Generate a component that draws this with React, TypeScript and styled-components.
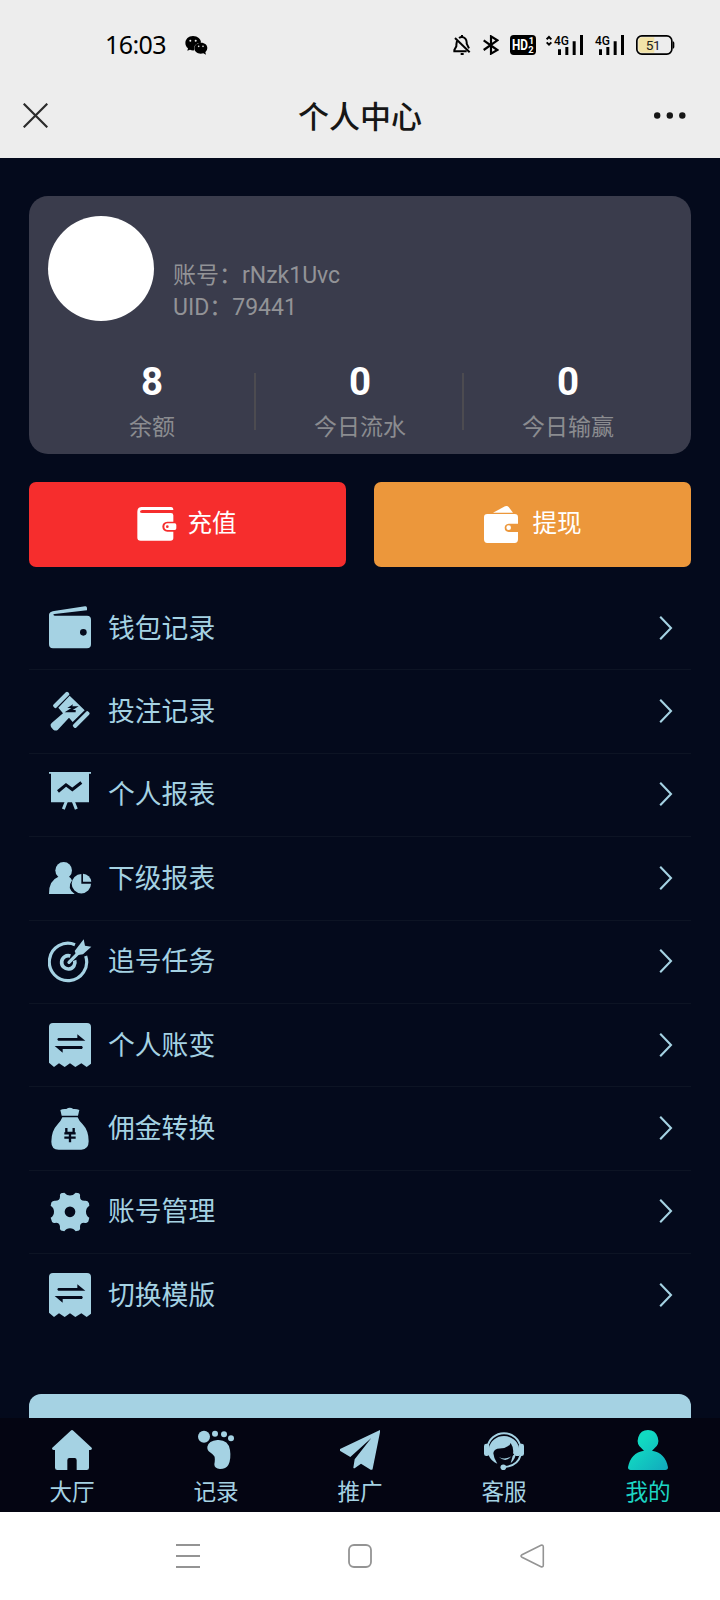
import React from 'react';
import styled, { createGlobalStyle } from 'styled-components';

const ICE = '#a5d2e3';
const NIGHT = '#040a1c';

const GlobalStyle = createGlobalStyle`
  *, *::before, *::after { box-sizing: border-box; }
  body {
    margin: 0;
    background: ${NIGHT};
    font-family: Roboto, "Noto Sans CJK SC", sans-serif;
  }
`;

const Screen = styled.div`
  display: flex;
  flex-direction: column;
  width: 720px;
  height: 1600px;
  overflow: hidden;
  background: ${NIGHT};
`;

const StatusBar = styled.div`
  display: flex;
  align-items: center;
  flex: none;
  height: 90px;
  padding: 0 45px 0 105px;
  background: #ededed;
  color: #000;
`;

const Clock = styled.span`
  width: 62px;
  padding-bottom: 2px;
  font-family: "Noto Sans", sans-serif;
  font-size: 25px;
  line-height: 34px;
  letter-spacing: -0.6px;
  white-space: nowrap;
`;

const StatusGlyph = styled.svg<{ $gap: number }>`
  display: block;
  flex: none;
  margin-left: ${(p) => p.$gap}px;
`;

const StatusSpacer = styled.div`
  flex: 1;
`;

const TitleBar = styled.header`
  display: flex;
  align-items: center;
  justify-content: space-between;
  flex: none;
  height: 68px;
  padding: 0 34px 18px 23px;
  background: #ededed;
`;

const PageTitle = styled.h1`
  margin: 0;
  padding: 5px 0 0 18px;
  font-size: 31px;
  font-weight: 500;
  line-height: 45px;
  color: #161616;
`;

const Glyph = styled.svg`
  display: block;
  flex: none;
`;

const Content = styled.main`
  display: flex;
  flex-direction: column;
  flex: 1;
  min-height: 0;
  overflow: hidden;
  padding: 38px 29px 0;
`;

const ProfileCard = styled.section`
  display: flex;
  flex-direction: column;
  flex: none;
  height: 258px;
  padding: 20px 19px 0;
  border-radius: 19px;
  background: #3a3c4c;
`;

const Identity = styled.div`
  display: flex;
  gap: 19px;
  height: 105px;
`;

const Avatar = styled.div`
  width: 106px;
  height: 105px;
  border-radius: 50%;
  background: #fff;
`;

const IdentityLines = styled.div`
  padding-top: 44px;
  font-size: 23px;
  line-height: 32px;
  color: #929397;
`;

const Stats = styled.div`
  display: grid;
  grid-template-columns: repeat(3, 1fr);
  margin-top: 38px;
`;

const Stat = styled.div`
  display: flex;
  flex-direction: column;
  align-items: center;
  position: relative;

  & + &::before {
    content: '';
    position: absolute;
    left: -2px;
    top: 14px;
    width: 2px;
    height: 57px;
    background: #4c4b50;
  }
`;

const StatValue = styled.strong`
  font-size: 38.5px;
  font-weight: 700;
  line-height: 46px;
  color: #fff;
`;

const StatLabel = styled.span`
  font-size: 23px;
  line-height: 34px;
  margin-top: 6px;
  color: #8b8c90;
`;

const Actions = styled.div`
  display: grid;
  grid-template-columns: 1fr 1fr;
  gap: 28px;
  flex: none;
  margin-top: 28px;
`;

const ActionButton = styled.button<{ $tone: string; $gap: number }>`
  display: flex;
  align-items: center;
  justify-content: center;
  gap: ${(p) => p.$gap}px;
  height: 85px;
  padding: 0 1px 2px 0;
  border: 0;
  border-radius: 7px;
  background: ${(p) => p.$tone};
  color: #fff;
  font: 400 24.6px/36px Roboto, "Noto Sans CJK SC", sans-serif;
`;

const Menu = styled.nav`
  flex: none;
  margin-top: 19px;
`;

const MenuRow = styled.a`
  display: flex;
  align-items: center;
  height: 83.4px;
  padding: 0 18.5px 0 19px;
  color: ${ICE};
  font-size: 26.8px;
  line-height: 40px;

  & + & {
    box-shadow: inset 0 1px 0 #0d1424;
  }
`;

const MenuLabel = styled.span`
  flex: 1;
  margin-left: 16px;
  padding-top: 1.8px;
`;

const LogoutButton = styled.div`
  flex: none;
  height: 83px;
  margin-top: 57.4px;
  border-radius: 12px;
  background: ${ICE};
`;

const TabBar = styled.nav`
  display: grid;
  grid-template-columns: repeat(5, 1fr);
  flex: none;
  height: 94px;
  background: #040512;
`;

const Tab = styled.a<{ $active?: boolean }>`
  display: flex;
  flex-direction: column;
  align-items: center;
  padding-top: 12px;
  color: ${(p) => (p.$active ? '#1dd5c4' : ICE)};
  font-size: 22.6px;
  line-height: 32px;
`;

const TabLabel = styled.span`
  margin-top: 7px;
`;

const SystemBar = styled.footer`
  display: flex;
  align-items: center;
  justify-content: space-between;
  flex: none;
  height: 88px;
  padding: 0 174px 0 175px;
  background: #fff;
`;

const FlapWalletIcon = () => (
  <g fill={ICE}>
    <path d="M87 436C87 426 93 424 102 422L195 408Q201 407 201 413V420L104 431Q96 433 104 436H201Q213 436 213 448V522Q213 534 201 534H99Q87 534 87 522Z" />
    <circle cx="190" cy="486" r="10" fill={NIGHT} />
  </g>
);

const GavelIcon = () => (
  <g fill={ICE}>
    <rect x="-31" y="-7" width="62" height="13" rx="5" transform="translate(94 90) rotate(-45)" />
    <rect x="-32" y="-7" width="64" height="13" rx="5" transform="translate(154 149) rotate(-45)" />
    <path d="M119 77L164 121L128 156L117 143L83 180Q77 184 70 179L63 171Q59 164 65 159L99 130L85 113Z" />
    <path d="M129 103L112 114H124L104 127H137V120H128L146 109H127Z" fill={NIGHT} />
  </g>
);

const BoardIcon = () => (
  <g fill={ICE}>
    <path d="M57 306H183V313H177V398H63V313H57Z" />
    <path d="M109 396L100 419M130 396L139 419" stroke={ICE} strokeWidth="9" />
    <path d="M84 366L108 346L127 360L154 339" stroke={NIGHT} strokeWidth="9" fill="none" />
  </g>
);

const TeamIcon = () => (
  <g fill={ICE}>
    <circle cx="101" cy="601" r="25" />
    <path d="M57 672Q56 632 84 621H118Q123 624 126 631Q109 653 134 672Z" />
    <path d="M154 612A29 29 0 1 0 183 641H154Z" />
    <path d="M159 611A26 26 0 0 1 184 635H159Z" />
  </g>
);

const TargetIcon = () => (
  <g fill="none" stroke={ICE}>
    <path d="M135 74A56 56 0 1 0 167 108" strokeWidth="9.5" />
    <path d="M121 108A20 20 0 1 0 134 121" strokeWidth="11" />
    <path d="M117 127L146 98" strokeWidth="10" strokeLinecap="round" />
    <path d="M134 93L161 58L165 77L184 80L159 103L139 106Z" fill={ICE} stroke="none" />
  </g>
);

const ReceiptIcon = () => (
  <g fill={ICE}>
    <path d="M57 321Q57 309 69 309H171Q183 309 183 321V431L170 441L154 430L136 441L120 430L104 441L87 430L72 441L57 428Z" />
    <path d="M85 354H142V343L166 362H85Q79 358 85 354ZM156 378H74L98 398V387H156Q161 383 156 378Z" fill={NIGHT} />
  </g>
);

const MoneyBagIcon = () => (
  <g fill={ICE}>
    <path d="M91 571Q98 567 109 568Q119 561 130 568Q140 567 148 571L144 588H95Z" />
    <path d="M97 593H143Q146 602 158 614Q176 633 176 665Q176 690 154 690H86Q64 690 64 666Q64 634 83 614Q94 602 97 593Z" />
    <path d="M109 625V640H131V625M103 641H137M103 654H137M120 639V668" stroke={NIGHT} strokeWidth="7" fill="none" />
  </g>
);

const GearIcon = () => (
  <g>
    <path
      fill={ICE}
      d="M93 70L103 69Q109 77 120 77Q131 77 137 69L147 70Q152 74 150 80Q150 94 165 93Q173 92 177 100L178 108Q168 114 168 126Q168 138 178 144L175 155Q170 161 162 159Q150 159 150 171Q152 179 147 182L137 184Q131 175 120 175Q109 175 103 184L93 182Q88 179 90 171Q89 159 78 159Q69 161 66 156L62 144Q72 138 72 126Q72 114 62 108L64 98Q68 92 76 93Q90 93 90 80Q88 74 93 70Z"
    />
    <circle cx="120" cy="126" r="16" fill={NIGHT} />
  </g>
);

const HomeIcon = () => (
  <path
    fill={ICE}
    d="M212 137Q216 133 220 137L275 188Q278 195 271 195H267V248Q267 255 260 255H230V226Q230 219 224 219H208Q202 219 202 226V255H172Q165 255 165 248V195H161Q154 194 157 188Z"
  />
);

const FootprintIcon = () => (
  <g fill={ICE}>
    <circle cx="612" cy="155" r="18" />
    <circle cx="645" cy="146" r="9" />
    <circle cx="672" cy="148" r="9" />
    <circle cx="693" cy="160" r="9" />
    <path d="M652 165Q685 163 690 195Q694 222 685 240Q678 252 660 252Q643 251 643 238Q646 221 643 214Q639 208 630 202Q621 196 622 185Q626 167 652 165Z" />
  </g>
);

const PlaneIcon = () => (
  <g fill={ICE}>
    <path d="M180 30L60 87Q58 91 62 94L91 111L154 54L104 118L100 143Q102 147 106 143L123 131L152 149Q157 151 158 146L181 32Z" />
  </g>
);

const SupportIcon = () => (
  <g fill={ICE}>
    <path d="M502 78A50.5 50.5 0 0 1 602 78" fill="none" stroke={ICE} strokeWidth="6" transform="translate(0 5)" />
    <path d="M507 84A45.5 42 0 0 1 597 84V108H588L579 100Q582 84 572 69Q568 80 553 84L532 86Q521 89 520 100Q521 115 532 131Q513 123 507 108Z" />
    <rect x="492" y="71" width="16" height="37" rx="7" />
    <rect x="596" y="71" width="16" height="37" rx="7" />
    <path d="M602 105Q593 138 553 141" fill="none" stroke={ICE} strokeWidth="6" />
    <path d="M588 97Q588 116 572 130L578 108ZM536 110Q554 122 574 109Q557 130 536 110Z" />
    <circle cx="550" cy="142" r="8.5" />
  </g>
);

const PersonIcon = () => (
  <g>
    <defs>
      <linearGradient id="person" x1="0" y1="0" x2="1" y2="1">
        <stop offset="0.3" stopColor="#11dac2" />
        <stop offset="1" stopColor="#12a8bd" />
      </linearGradient>
    </defs>
    <path
      fill="url(#person)"
      d="M864 135A31 31 0 0 1 882 191L876 197Q916 203 924 247Q924 255 916 255H812Q804 255 804 247Q812 203 852 197L846 191A31 31 0 0 1 864 135Z"
    />
  </g>
);

const MENU = [
  { label: '钱包记录', box: '84 407 132 132', Icon: FlapWalletIcon },
  { label: '投注记录', box: '54 57 132 132', Icon: GavelIcon },
  { label: '个人报表', box: '54 307.5 132 132', Icon: BoardIcon },
  { label: '下级报表', box: '54 557.7 132 132', Icon: TeamIcon },
  { label: '追号任务', box: '54 57 132 132', Icon: TargetIcon },
  { label: '个人账变', box: '54 309 132 132', Icon: ReceiptIcon },
  { label: '佣金转换', box: '54 559 132 132', Icon: MoneyBagIcon },
  { label: '账号管理', box: '54 57.5 132 132', Icon: GearIcon },
  { label: '切换模版', box: '54 309 132 132', Icon: ReceiptIcon },
];

const TABS = [
  { label: '大厅', box: '156 135 120 120', Icon: HomeIcon },
  { label: '记录', box: '588 135 120 120', Icon: FootprintIcon },
  { label: '推广', box: '60 30 120 120', Icon: PlaneIcon },
  { label: '客服', box: '492 30 120 120', Icon: SupportIcon },
  { label: '我的', box: '804 135 120 120', Icon: PersonIcon, active: true },
];

const STATS = [
  { value: '8', label: '余额' },
  { value: '0', label: '今日流水' },
  { value: '0', label: '今日输赢' },
];

const SignalBars = () => (
  <path d="M594 148H603V165H594ZM616 141H625V165H616ZM638 124H647V165H638ZM660 105H669V165H660Z" />
);

const NetworkLabel = () => (
  <text x="582" y="135" fontFamily="Roboto, sans-serif" fontSize="39" fontWeight="500" textLength="45" lengthAdjust="spacingAndGlyphs">
    4G
  </text>
);

export default function App() {
  return (
    <>
      <GlobalStyle />
      <Screen>
        <StatusBar>
          <Clock>16:03</Clock>
          <StatusGlyph $gap={18} width="23" height="20" viewBox="555 104 69 60">
            <path d="M579 107C593 107 603 116 603 127C586 128 580 139 583 150Q575 151 570 148L562 151L564 144C548 130 558 107 579 107Z" />
            <path d="M603 127C615 127 622 134 622 143Q622 151 616 156L618 163L610 159C595 163 583 155 583 144C583 134 592 127 603 127Z" />
            <g fill="#ededed">
              <circle cx="571" cy="121" r="3" />
              <circle cx="587" cy="121" r="3" />
              <circle cx="596" cy="138" r="2.5" />
              <circle cx="609" cy="138" r="2.5" />
            </g>
          </StatusGlyph>
          <StatusSpacer />
          <StatusGlyph $gap={0} width="18" height="20" viewBox="280 105 54 60">
            <g fill="none" stroke="#000" strokeWidth="6">
              <path d="M298 114Q308 107 317 116Q322 122 321 131L328 145M292 123Q290 131 290 139L284 150V154H321" />
              <path d="M286 114L330 157" />
              <path d="M307 105V111M303 162H312" />
            </g>
          </StatusGlyph>
          <StatusGlyph $gap={12} width="16" height="20" viewBox="369 105 48 60">
            <path d="M371 121L412 150L393 161V109L412 121L371 150" fill="none" stroke="#000" strokeWidth="6.5" />
          </StatusGlyph>
          <StatusGlyph $gap={11} width="26" height="20" viewBox="450 105 78 60">
            <rect x="450" y="105" width="78" height="60" rx="11" />
            <g fill="#fff" fontFamily="Roboto, sans-serif" fontWeight="700">
              <text x="456" y="150" fontSize="43" textLength="48" lengthAdjust="spacingAndGlyphs">HD</text>
              <text x="506" y="133" fontSize="28">1</text>
              <text x="505" y="158" fontSize="28">2</text>
            </g>
          </StatusGlyph>
          <StatusGlyph $gap={10} width="37" height="32" viewBox="558 87 111 96">
            <path d="M560 118L567 111L574 118M560 127L567 134L574 127" fill="none" stroke="#000" strokeWidth="6" />
            <NetworkLabel />
            <SignalBars />
          </StatusGlyph>
          <StatusGlyph $gap={11} width="30" height="32" viewBox="579 87 90 96">
            <NetworkLabel />
            <SignalBars />
          </StatusGlyph>
          <StatusGlyph $gap={12} width="39" height="20" viewBox="827 105 117 60">
            <rect x="829.5" y="107.5" width="105" height="55" rx="15" fill="#ededed" stroke="#000" strokeWidth="5" />
            <path d="M845 112H882V158H845Q834 158 834 147V123Q834 112 845 112Z" fill="#f2e3a8" />
            <path d="M937 124Q942 124 942 129V141Q942 146 937 146Z" />
            <text x="856" y="149" fontFamily="Roboto, sans-serif" fontSize="41" fill="#222" textLength="45">51</text>
          </StatusGlyph>
        </StatusBar>
        <TitleBar>
          <Glyph width="25" height="25" viewBox="0 0 25 25">
            <path d="M0.7 0.7L24.3 24.3M24.3 0.7L0.7 24.3" stroke="#2b2b2b" strokeWidth="2.2" />
          </Glyph>
          <PageTitle>个人中心</PageTitle>
          <Glyph width="32" height="7" viewBox="0 0 32 7">
            <g fill="#161616">
              <circle cx="3.2" cy="3.5" r="3.2" />
              <circle cx="15.8" cy="3.5" r="3.2" />
              <circle cx="28.3" cy="3.5" r="3.2" />
            </g>
          </Glyph>
        </TitleBar>
        <Content>
          <ProfileCard>
            <Identity>
              <Avatar />
              <IdentityLines>
                <div>账号：rNzk1Uvc</div>
                <div>UID：79441</div>
              </IdentityLines>
            </Identity>
            <Stats>
              {STATS.map((s) => (
                <Stat key={s.label}>
                  <StatValue>{s.value}</StatValue>
                  <StatLabel>{s.label}</StatLabel>
                </Stat>
              ))}
            </Stats>
          </ProfileCard>
          <Actions>
            <ActionButton $tone="#f62d2d" $gap={10}>
              <Glyph width="40" height="38" viewBox="350 108 120 114">
                <path d="M351 128Q351 114 364 114H452Q459 114 459 123H366Q359 124 359 128Q359 132 366 132H452Q459 132 459 139V158H441Q426 160 426 173Q427 187 441 188H459V207Q459 215 450 215H361Q351 215 351 206Z" fill="#fff" />
                <path d="M442 163H463Q468 163 468 168V178Q468 183 463 183H442Q432 182 432 173Q432 164 442 163Z" fill="#fff" />
                <circle cx="441" cy="173" r="4" fill="#f62d2d" />
              </Glyph>
              充值
            </ActionButton>
            <ActionButton $tone="#ec973b" $gap={12}>
              <Glyph width="38" height="38" viewBox="369 495 114 114">
                <path d="M402 518L438 499Q445 496 449 501L462 518Z" fill="#fff" />
                <path d="M385 522H467Q477 522 477 532V551H449Q437 552 437 563Q437 574 449 576H477V598Q477 609 467 609H385Q375 609 375 598V532Q375 522 385 522Z" fill="#fff" />
                <circle cx="449" cy="563" r="7" fill="#fff" />
              </Glyph>
              提现
            </ActionButton>
          </Actions>
          <Menu>
            {MENU.map(({ label, box, Icon }) => (
              <MenuRow key={label}>
                <Glyph width="44" height="44" viewBox={box}>
                  <Icon />
                </Glyph>
                <MenuLabel>{label}</MenuLabel>
                <Glyph width="14" height="24" viewBox="0 0 14 24">
                  <path d="M1.2 0.8L12 12L1.2 23.2" fill="none" stroke={ICE} strokeWidth="2.1" />
                </Glyph>
              </MenuRow>
            ))}
          </Menu>
          <LogoutButton />
        </Content>
        <TabBar>
          {TABS.map(({ label, box, Icon, active }) => (
            <Tab key={label} $active={active}>
              <Glyph width="40" height="40" viewBox={box}>
                <Icon />
              </Glyph>
              <TabLabel>{label}</TabLabel>
            </Tab>
          ))}
        </TabBar>
        <SystemBar>
          <Glyph width="25" height="25" viewBox="0 0 25 25">
            <path d="M1 1H25M1 12H25M1 23H25" stroke="#949494" strokeWidth="2" />
          </Glyph>
          <Glyph width="24" height="24" viewBox="0 0 24 24">
            <rect x="1" y="1" width="22" height="22" rx="5" fill="none" stroke="#949494" strokeWidth="1.8" />
          </Glyph>
          <Glyph width="26" height="24" viewBox="0 0 26 24">
            <path d="M21 1.3Q23.3 0.5 23.3 3V21Q23.3 23.5 21 22.7L2 13.2Q0 12 2 10.8Z" fill="none" stroke="#949494" strokeWidth="1.6" />
          </Glyph>
        </SystemBar>
      </Screen>
    </>
  );
}
